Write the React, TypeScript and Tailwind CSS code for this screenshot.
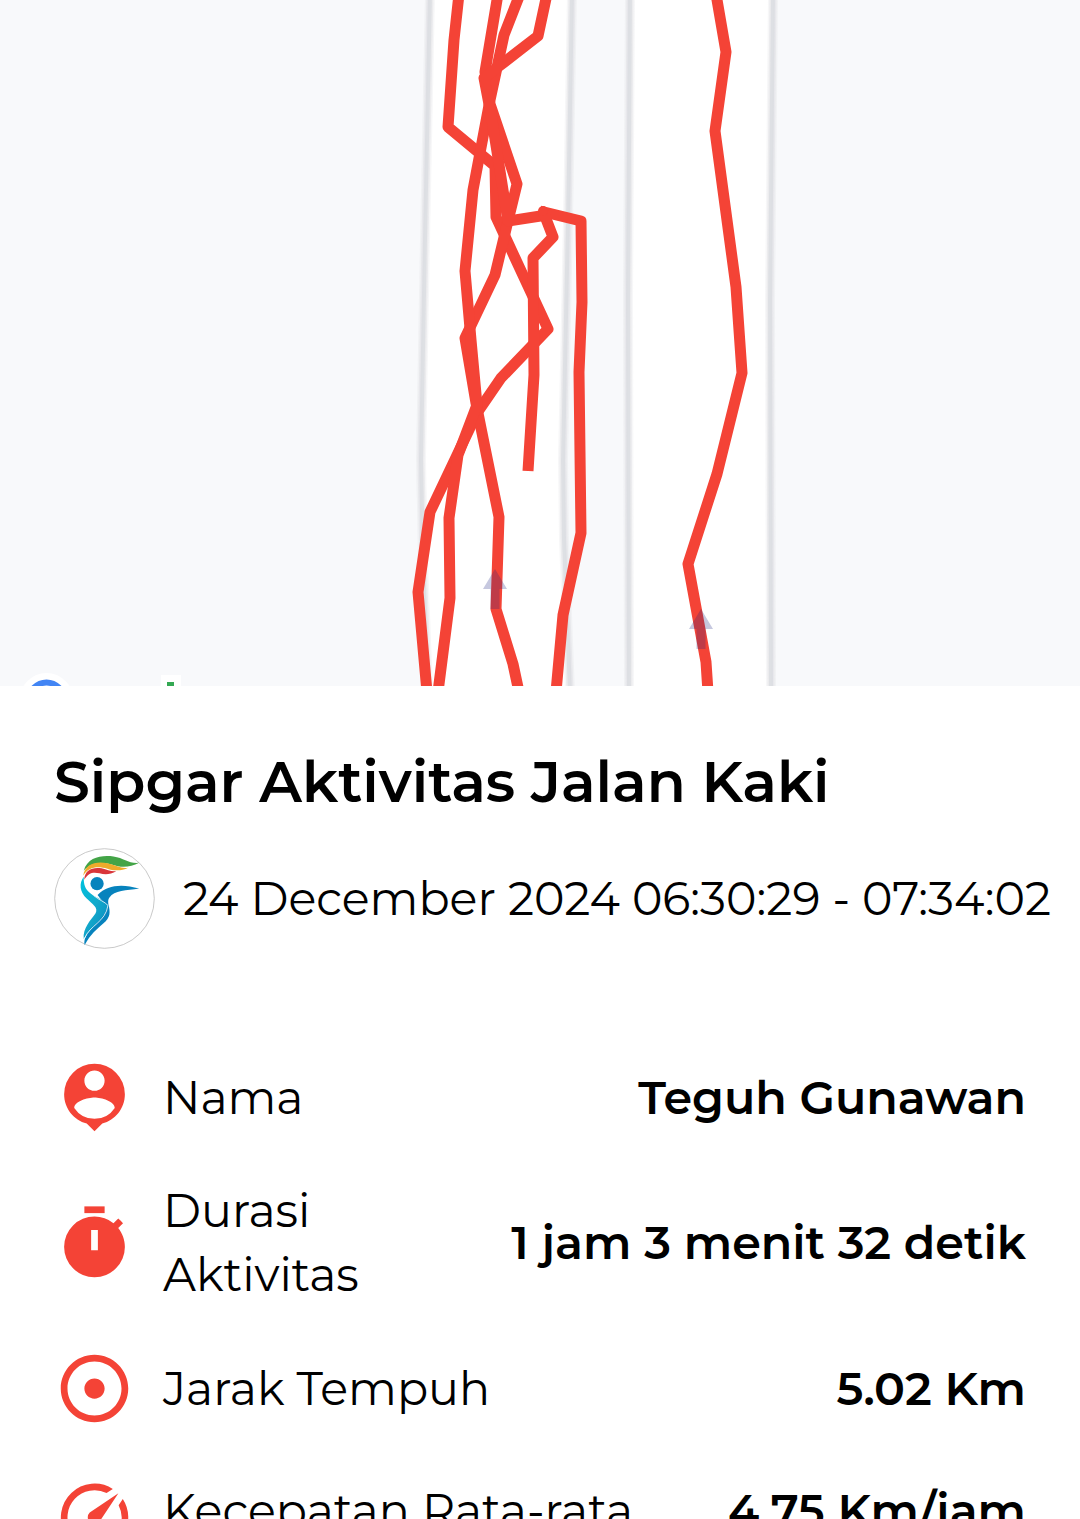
import { MdAdjust, MdPersonPin, MdSpeed } from "react-icons/md";

const ROUTES = [
  "459,-6 454,40 448,127 495,166 496,217 548,329 501,378 477,413 430,512 418,592 427,692",
  "498,-6 485,72 490,104 517,184 507,225 495,275 465,338 476,403 481,428 499,517 496,609 513,664 519,692",
  "520,-6 504,35 490,100 473,190 465,271 471,340 477,405 458,455 449,518 450,598 438,692",
  "547,-6 538,36 498,67 484,78 492,120 503,190 508,221 547,215",
  "540,211 581,221 582,302 579,372 581,533 563,615 556,692",
  "543,211 553,237 533,258 534,375 528,471",
  "716,-6 726,52 715,131 736,287 742,373 717,474 688,564 706,662 708,692",
];

const ROAD_EDGES = [
  "M430 -6 L425 240 L421 460 L423 560 L428 692",
  "M572 -6 L568 220 L563 460 L564 540 L570 692",
  "M630 -6 L628 300 L629 692",
  "M773 -6 L770 300 L771 692",
];

function TimerIcon({ className }: { className?: string }) {
  return (
    <svg className={className} viewBox="0 0 24 24" fill="currentColor">
      <path d="M9 1h6v2H9z" />
      <path d="M19.03 7.39l1.42-1.42c-.43-.51-.9-.99-1.41-1.41l-1.42 1.42A8.96 8.96 0 0 0 12 4a9 9 0 1 0 9 9c0-2.12-.74-4.07-1.97-5.61zM13 14h-2V8h2v6z" />
    </svg>
  );
}

const STATS = [
  { label: "Nama", value: "Teguh Gunawan", Icon: MdPersonPin },
  { label: "Durasi\nAktivitas", value: "1 jam 3 menit 32 detik", Icon: TimerIcon },
  { label: "Jarak Tempuh", value: "5.02 Km", Icon: MdAdjust },
  { label: "Kecepatan Rata-rata", value: "4.75 Km/jam", Icon: MdSpeed },
];

function RouteMap() {
  return (
    <svg className="block w-full h-auto bg-[#f8f9fb]" viewBox="0 0 1080 686" role="img" aria-label="Peta rute">
      {/* Roads */}
      <path fill="#fff" d="M430 0 L425 240 L421 460 L423 560 L428 686 H570 L564 540 L563 460 L568 220 L572 0z" />
      <path fill="#fff" d="M630 0 L628 300 L629 686 H771 L770 300 L773 0z" />
      {ROAD_EDGES.map((d) => (
        <g key={d} fill="none" stroke="#d6d8dd">
          <path d={d} strokeWidth={10} opacity={0.2} />
          <path d={d} strokeWidth={7} opacity={0.35} />
          <path d={d} strokeWidth={4} opacity={0.6} />
        </g>
      ))}

      {/* Walked path */}
      {ROUTES.map((points) => (
        <polyline key={points} points={points} fill="none" stroke="#f44336" strokeWidth={11} strokeLinejoin="round" />
      ))}
      <circle cx={543} cy={211} r={5} fill="#f44336" />

      {/* Direction arrows */}
      <g fill="#1a237e" opacity={0.25}>
        <path d="M495 569l12 20h-7.500v20h-9v-20H483z" />
        <path d="M701 609l12 20h-7.500v20h-9v-20H689z" />
      </g>

      {/* Map logo */}
      <circle cx={46.500} cy={700} r={27} fill="#fff" />
      <circle cx={46.500} cy={700} r={17.500} fill="none" stroke="#4285f4" strokeWidth={6} />
      <path fill="#fff" d="M161 675h20v11h-20z" />
      <path fill="#34a853" d="M167 682h7v4h-7z" />
    </svg>
  );
}

function Avatar() {
  return (
    <svg className="size-[101px] shrink-0" viewBox="0 0 102 102" role="img" aria-label="Sipgar">
      <defs>
        <linearGradient id="body" x1="0" y1="0" x2="1" y2="1">
          <stop offset="0" stopColor="#00c2de" />
          <stop offset="0.5" stopColor="#12a9cb" />
          <stop offset="1" stopColor="#0783bd" />
        </linearGradient>
      </defs>
      <circle cx={51} cy={51} r={50.300} fill="#fff" stroke="#bbb" strokeWidth={0.800} />
      <path fill="#43a447" d="M30 23C34 9 48 7 60 8.500C71 10 75 16 86 15C77 20 67 20 59 17C49 14 38 14 30 23z" />
      <path fill="#efab2b" d="M29.500 28C31 16 43 13 54 15.500C63 17.500 67 21 75 20C68 23.500 60 23 54 21C44 18 35 19 29.500 28z" />
      <path fill="#d9363a" d="M30.500 32C31 22 39 19 48 20.500C54 22 57 24 63 23.500C57 27 51 27 46 25.500C39 24 35 25 30.500 32z" />
      <circle cx={43.500} cy={36} r={6.700} fill="#0783bd" />
      <path fill="url(#body)" d="M30 29C25 36 26 44 33 51C39 57 45 60 42 66C37 73 29 81 30 92C36 80 53 74 55 58C50 52 43 51 37 46C31 41 30 37 30 29z" />
      <path fill="#0783bd" d="M44 47.500C54 37 69 36 86 41C73 43 61 43 56 50C54 53 55 55 55 58C50 55 47 52 44 47.500z" />
      <path fill="#0783bd" d="M55 57C57 65 57 70 50 76C43 82 37 87 31 98C28 84 50 76 55 57z" />
      <path fill="none" stroke="#fff" strokeWidth={0.800} d="M40 48C46 53 51 54 54.500 58C52 75 36 78 31 91" />
    </svg>
  );
}

export default function App() {
  return (
    <main className="h-screen overflow-hidden bg-white text-black font-['Montserrat','Inter',sans-serif]">
      <RouteMap />

      <section className="pt-16 pl-[54px] pr-7">
        <h1 className="text-[57px] leading-[64px] font-semibold whitespace-nowrap">Sipgar Aktivitas Jalan Kaki</h1>
        <div className="mt-[34px] flex items-center gap-7">
          <Avatar />
          <p className="text-[46px] leading-[64px] font-normal whitespace-nowrap">24 December 2024 06:30:29 - 07:34:02</p>
        </div>
      </section>

      {/* Activity stats */}
      <dl className="mt-[108px] flex flex-col gap-[41px] px-[54px]">
        {STATS.map(({ label, value, Icon }) => (
          <div key={label} className="flex items-center min-h-[81px]">
            <Icon className="size-[81px] shrink-0 text-[#f44336]" />
            <dt className="ml-7 flex-1 text-[46px] leading-[64px] font-normal whitespace-pre">{label}</dt>
            <dd className="text-[46px] leading-[64px] font-semibold whitespace-nowrap text-right">{value}</dd>
          </div>
        ))}
      </dl>
    </main>
  );
}
